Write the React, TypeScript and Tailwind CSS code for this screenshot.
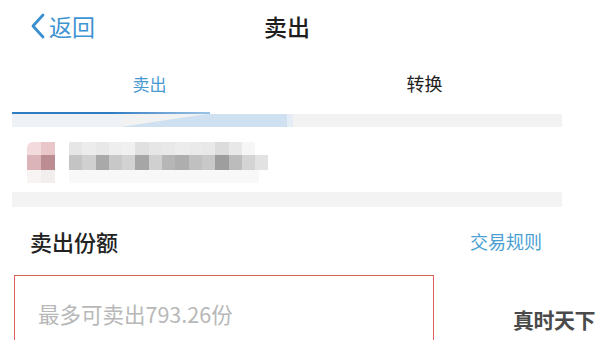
import React from 'react'

const topRow = [
  'bg-[#e6e6e6]', 'bg-[#ececec]', 'bg-[#e8e8e8]', 'bg-[#eeeeee]', 'bg-[#f0f0f0]',
  'bg-[#e0e0e0]', 'bg-[#e6e6e6]', 'bg-[#e8e8e8]', 'bg-[#ececec]', 'bg-[#eaeaea]',
  'bg-[#e8e8e8]', 'bg-[#dcdcdc]', 'bg-[#e8e8e8]', 'bg-[#f6f6f6]', 'bg-white',
]
const midRow = [
  'bg-[#c4c4c4]', 'bg-[#d0d0d0]', 'bg-[#a9a9a9]', 'bg-[#c8c8c8]', 'bg-[#d2d2d2]',
  'bg-[#a6a6a6]', 'bg-[#d0d0d0]', 'bg-[#b6b6b6]', 'bg-[#aeaeae]', 'bg-[#c0c0c0]',
  'bg-[#c8c8c8]', 'bg-[#9e9e9e]', 'bg-[#bcbcbc]', 'bg-[#d4d4d4]', 'bg-[#e2e2e2]',
]

const Mosaic = () => (
  <div className="flex items-start gap-[14px] pl-[27px] pt-[15px] h-[65px]">
    <div className="grid grid-cols-2 w-[28px]">
      <div className="h-[13px] bg-[#f2dadd] rounded-tl-[6px]" />
      <div className="h-[13px] bg-[#e8c6ca]" />
      <div className="h-[15px] bg-[#dbb4b9]" />
      <div className="h-[15px] bg-[#bb8d93]" />
      <div className="h-[13px] bg-[#f8f4f4]" />
      <div className="h-[13px] bg-[#f2eeee]" />
    </div>
    <div className="flex flex-col">
      <div className="flex">
        {topRow.map((c, i) => (
          <div key={i} className={`w-[13.3px] h-[13px] ${c}`} />
        ))}
      </div>
      <div className="flex">
        {midRow.map((c, i) => (
          <div key={i} className={`w-[13.3px] h-[15px] ${c}`} />
        ))}
      </div>
      <div className="h-[13px] w-[190px] bg-[#f8f8f8]" />
    </div>
  </div>
)

export default function App() {
  return (
    <div
      className="relative w-[600px] h-[340px] overflow-hidden bg-white"
      style={{ fontFamily: '"Noto Sans CJK SC", "Noto Sans", sans-serif' }}
    >
      <div className="w-[574px]">
        {/* header */}
        <div className="relative flex items-center h-[52px] pl-[30px]">
          <div className="flex items-center gap-[3px] text-[#3f94d2]">
            <svg width="16" height="26" viewBox="0 0 16 26" fill="none">
              <path d="M13 2 L3 13 L13 24" stroke="#3a8fd0" strokeWidth="2.8" strokeLinecap="round" strokeLinejoin="round" />
            </svg>
            <span className="text-[23px] leading-none">返回</span>
          </div>
          <div className="absolute inset-0 flex items-center justify-center text-[23px] font-medium text-[#1e1e1e]">
            卖出
          </div>
        </div>

        {/* tabs */}
        <div className="flex mx-3 h-[60px] items-center pt-[3px]">
          <div className="flex-1 text-center text-[17px] text-[#4a9ad2]">卖出</div>
          <div className="flex-1 text-center text-[18px] text-[#222]">转换</div>
        </div>
        <div className="mx-3">
          <div className="h-[2px] w-[198px] bg-gradient-to-r from-[#2f7dc2] via-[#2f7dc2] to-[#9cc4e6]" />
          <svg width="550" height="13" viewBox="0 0 550 13" className="block">
            <rect x="0" y="0" width="550" height="13" fill="#f2f2f2" />
            <rect x="0" y="0" width="110" height="13" fill="#eef2f6" />
            <polygon points="108,13 195,0 275,0 275,13" fill="#cfe1f1" />
            <rect x="275" y="0" width="6" height="13" fill="#e4edf5" />
          </svg>
        </div>

        <Mosaic />

        <div className="mx-3 h-[15px] bg-[#f3f3f3]" />

        {/* amount header */}
        <div className="flex items-center justify-between h-[68px] pl-[30px] pr-[32px]">
          <span className="text-[22px] font-medium text-[#222]">卖出份额</span>
          <span className="text-[18px] text-[#4a9fd2]">交易规则</span>
        </div>

        <div className="ml-[14px] w-[420px] h-[90px] border-[1.5px] border-[#d8625c] pl-[23px] pt-[22px]">
          <span className="text-[21.5px] text-[#b8b8b8]">最多可卖出793.26份</span>
        </div>
      </div>

      <div className="absolute right-[5px] bottom-[5px] text-[21px] font-bold text-[#4a4a4a] tracking-[-0.5px]">
        真时天下
      </div>
    </div>
  )
}
